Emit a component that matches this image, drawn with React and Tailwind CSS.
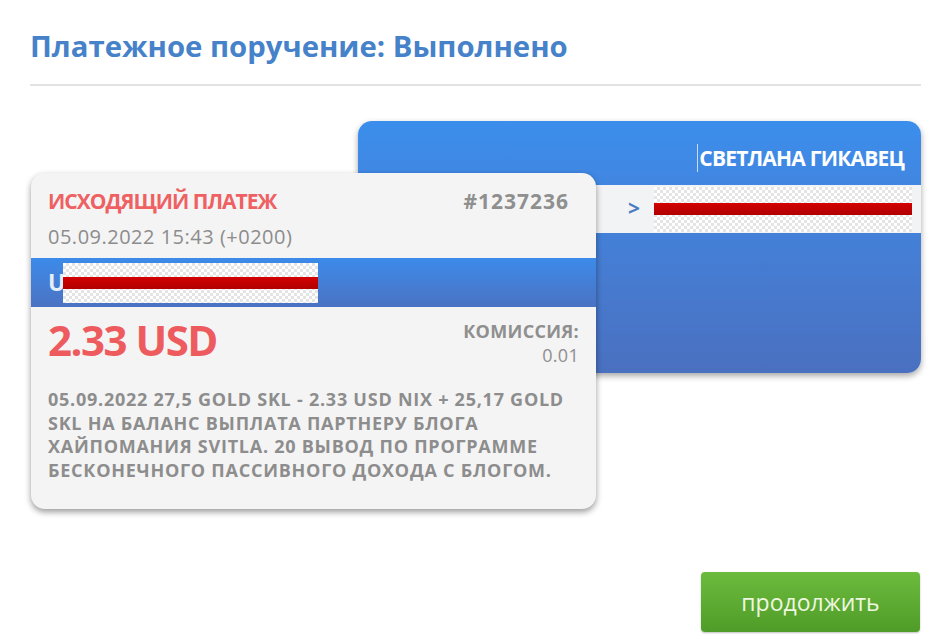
const FONT = "font-['Open_Sans','Lato',sans-serif]"

const DESCRIPTION = [
    '05.09.2022 27,5 GOLD SKL - 2.33 USD NIX + 25,17 GOLD',
    'SKL НА БАЛАНС ВЫПЛАТА ПАРТНЕРУ БЛОГА',
    'ХАЙПОМАНИЯ SVITLA. 20 ВЫВОД ПО ПРОГРАММЕ',
    'БЕСКОНЕЧНОГО ПАССИВНОГО ДОХОДА С БЛОГОМ.',
]

function Redacted({ className }) {
    // checkerboard "transparent" block with red bar, as in the screenshot
    return (
        <span className={`flex items-center bg-[repeating-conic-gradient(#e4e4e4_0_25%,#ffffff_0_50%)] bg-[length:6px_6px] ${className}`}>
            <span className="block w-full h-[12px] bg-gradient-to-b from-[#d40000] to-[#b00000]" />
        </span>
    )
}

export default function App() {
    return (
        <div className={`w-[931px] h-[641px] bg-white pl-[30px] pr-[10px] pt-[26px] ${FONT}`}>
            {/* Header */}
            <h1 className="text-[29.3px] leading-[40px] font-bold text-[#4682c9]">
                Платежное поручение: Выполнено
            </h1>
            <div className="mt-[18px] h-[2px] bg-[#e2e2e2]" />

            {/* Cards */}
            <div className="mt-[35px] ml-[328px] w-[563px] h-[252px] rounded-[14px] bg-gradient-to-b from-[#3b8eec] to-[#4a70c0] shadow-[0_3px_6px_rgba(0,0,0,0.35)] overflow-hidden">
                <div className="h-[64px] flex items-center justify-end pr-[17px] pt-[10px]">
                    <span className="border-l border-[#c9dcf5] pl-[1px] text-[21px] leading-[28px] font-bold text-white tracking-[-0.8px]">
                        СВЕТЛАНА ГИКАВЕЦ
                    </span>
                </div>
                <div className="h-[48px] bg-[#f2f3f5] flex items-center pl-[270px] pr-[9px]">
                    <span className="text-[21px] font-bold text-[#4a7cc0] w-[26px]">&gt;</span>
                    <Redacted className="flex-1 h-[45px]" />
                </div>
            </div>

            <div className="relative z-10 -mt-[200px] ml-[1px] w-[565px] h-[336px] rounded-[14px] bg-[#f4f4f4] shadow-[0_3px_6px_rgba(0,0,0,0.4)] overflow-hidden">
                <div className="px-[17px] pt-[15px] h-[85px]">
                    <div className="flex justify-between items-start">
                        <span className="text-[21px] leading-[26px] font-bold text-[#ee6062] tracking-[-1px]">ИСХОДЯЩИЙ ПЛАТЕЖ</span>
                        <span className="text-[21px] leading-[26px] font-bold text-[#8f8f8f] tracking-[1px] pr-[10px]">#1237236</span>
                    </div>
                    <div className="mt-[11px] text-[20px] leading-[24px] text-[#8c8c8c] tracking-[0.5px]">05.09.2022 15:43 (+0200)</div>
                </div>
                <div className="h-[49px] bg-gradient-to-b from-[#3b8bea] to-[#4a72c2] flex items-center pl-[17px]">
                    <span className="text-[23px] font-bold text-[#e6eefa] w-[15px]">U</span>
                    <Redacted className="w-[255px] h-[40px]" />
                </div>
                <div className="flex justify-between px-[17px] pt-[9px]">
                    <span className="text-[42px] leading-[48px] font-bold text-[#ee5b5e] tracking-[-1.5px]">2.33 USD</span>
                    <div className="pt-[3px] text-right text-[18px] leading-[24px] font-bold text-[#8f8f8f] tracking-[0.3px]">
                        <div>КОМИССИЯ:</div>
                        <div className="font-normal">0.01</div>
                    </div>
                </div>
                <div className="px-[17px] mt-[21px] text-[18px] leading-[23.7px] font-bold text-[#8d8d8d] tracking-[0.75px]">
                    {DESCRIPTION.map(line => (
                        <div key={line} className="whitespace-nowrap">{line}</div>
                    ))}
                </div>
            </div>

            {/* Footer */}
            <div className="flex justify-end mt-[63px] pr-[1px]">
                <button className="w-[219px] h-[60px] rounded-[4px] bg-gradient-to-b from-[#6cbb3d] to-[#4f9d28] shadow-[0_1px_2px_rgba(0,0,0,0.25)] text-[23px] text-[#eef7e0]">
                    продолжить
                </button>
            </div>
        </div>
    )
}
